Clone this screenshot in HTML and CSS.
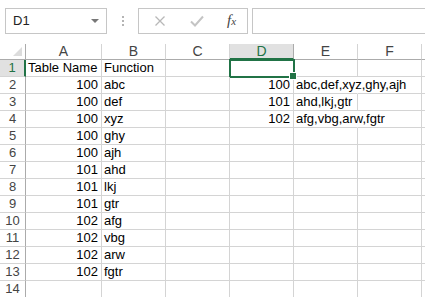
FILE: index.html
```html
<!DOCTYPE html>
<html lang="en">

<head>
    <meta charset="UTF-8">
    <title>Sheet1</title>
    <link rel="stylesheet" href="styles.css">
</head>

<body>
    <!-- Formula bar -->
    <div class="toolbar">
        <div class="name-box">
            <span>D1</span>
            <span class="caret"></span>
        </div>
        <div class="grip"><i></i><i></i><i></i></div>
        <div class="fx-group">
            <svg class="fx-icon" width="12" height="12" viewBox="0 0 12 12">
                <path d="M1.5 1.5 L10.5 10.5 M10.5 1.5 L1.5 10.5" stroke="#b8b8b8" stroke-width="1.3" fill="none"/>
            </svg>
            <svg class="fx-icon" width="14" height="12" viewBox="0 0 14 12">
                <path d="M1 6.5 L5 10.5 L13 1.5" stroke="#c4c4c4" stroke-width="2" fill="none"/>
            </svg>
            <span class="fx">f<small>x</small></span>
        </div>
        <div class="formula-input"></div>
    </div>

    <!-- Grid -->
    <div class="sheet">
        <div class="corner"><span class="tri"></span></div>
        <div class="col-head">A</div>
        <div class="col-head">B</div>
        <div class="col-head">C</div>
        <div class="col-head active">D</div>
        <div class="col-head">E</div>
        <div class="col-head">F</div>
        <div class="col-head"></div>

        <div class="row-head active">1</div>
        <div class="cell">Table Name</div>
        <div class="cell">Function</div>
        <div class="cell"></div>
        <div class="cell selected"></div>
        <div class="cell"></div>
        <div class="cell"></div>
        <div class="cell"></div>

        <div class="row-head">2</div>
        <div class="cell num">100</div>
        <div class="cell">abc</div>
        <div class="cell"></div>
        <div class="cell num">100</div>
        <div class="cell spill">abc,def,xyz,ghy,ajh</div>
        <div class="cell"></div>
        <div class="cell"></div>

        <div class="row-head">3</div>
        <div class="cell num">100</div>
        <div class="cell">def</div>
        <div class="cell"></div>
        <div class="cell num">101</div>
        <div class="cell">ahd,lkj,gtr</div>
        <div class="cell"></div>
        <div class="cell"></div>

        <div class="row-head">4</div>
        <div class="cell num">100</div>
        <div class="cell">xyz</div>
        <div class="cell"></div>
        <div class="cell num">102</div>
        <div class="cell spill">afg,vbg,arw,fgtr</div>
        <div class="cell"></div>
        <div class="cell"></div>

        <div class="row-head">5</div>
        <div class="cell num">100</div>
        <div class="cell">ghy</div>
        <div class="cell"></div><div class="cell"></div><div class="cell"></div><div class="cell"></div><div class="cell"></div>

        <div class="row-head">6</div>
        <div class="cell num">100</div>
        <div class="cell">ajh</div>
        <div class="cell"></div><div class="cell"></div><div class="cell"></div><div class="cell"></div><div class="cell"></div>

        <div class="row-head">7</div>
        <div class="cell num">101</div>
        <div class="cell">ahd</div>
        <div class="cell"></div><div class="cell"></div><div class="cell"></div><div class="cell"></div><div class="cell"></div>

        <div class="row-head">8</div>
        <div class="cell num">101</div>
        <div class="cell">lkj</div>
        <div class="cell"></div><div class="cell"></div><div class="cell"></div><div class="cell"></div><div class="cell"></div>

        <div class="row-head">9</div>
        <div class="cell num">101</div>
        <div class="cell">gtr</div>
        <div class="cell"></div><div class="cell"></div><div class="cell"></div><div class="cell"></div><div class="cell"></div>

        <div class="row-head">10</div>
        <div class="cell num">102</div>
        <div class="cell">afg</div>
        <div class="cell"></div><div class="cell"></div><div class="cell"></div><div class="cell"></div><div class="cell"></div>

        <div class="row-head">11</div>
        <div class="cell num">102</div>
        <div class="cell">vbg</div>
        <div class="cell"></div><div class="cell"></div><div class="cell"></div><div class="cell"></div><div class="cell"></div>

        <div class="row-head">12</div>
        <div class="cell num">102</div>
        <div class="cell">arw</div>
        <div class="cell"></div><div class="cell"></div><div class="cell"></div><div class="cell"></div><div class="cell"></div>

        <div class="row-head">13</div>
        <div class="cell num">102</div>
        <div class="cell">fgtr</div>
        <div class="cell"></div><div class="cell"></div><div class="cell"></div><div class="cell"></div><div class="cell"></div>

        <div class="row-head">14</div>
        <div class="cell"></div><div class="cell"></div><div class="cell"></div><div class="cell"></div><div class="cell"></div><div class="cell"></div><div class="cell"></div>
    </div>
</body>

</html>
```

FILE: styles.css
```css
* {
    box-sizing: border-box;
}

body {
    margin: 0;
    background-color: #fff;
    font-family: "Liberation Sans", Arial, sans-serif;
    overflow: hidden;
}

/* formula bar */
.toolbar {
    display: flex;
    align-items: center;
    height: 44px;
    padding: 0 0 3px 5px;
}

.name-box {
    display: flex;
    align-items: center;
    justify-content: space-between;
    width: 102px;
    height: 26px;
    padding: 0 7px 0 7px;
    border: 1px solid #c6c6c6;
    font-size: 13px;
    color: #222;
}

.caret {
    width: 0;
    height: 0;
    border-left: 4px solid transparent;
    border-right: 4px solid transparent;
    border-top: 4px solid #777;
    margin-top: 1px;
}

.grip {
    display: flex;
    flex-direction: column;
    gap: 2px;
    width: 31px;
    align-items: center;
}

.grip i {
    width: 2px;
    height: 2px;
    background-color: #b4b4b4;
}

.fx-group {
    display: flex;
    align-items: center;
    width: 110px;
    height: 26px;
    padding-left: 15px;
    border: 1px solid #c6c6c6;
}

.fx-icon {
    margin-right: 24px;
}

.fx-icon + .fx-icon {
    margin-right: 23px;
}

.fx {
    font-family: "Liberation Serif", "Times New Roman", serif;
    font-style: italic;
    font-size: 15px;
    color: #444;
}

.fx small {
    font-size: 11px;
}

.formula-input {
    flex: 1;
    height: 26px;
    margin-left: 4px;
    border: 1px solid #c6c6c6;
    border-right: none;
}

/* grid */
.sheet {
    display: grid;
    grid-template-columns: 26px 76px 64px 64px 64px 64px 64px 10px;
    grid-template-rows: 16px;
    grid-auto-rows: 17px;
    font-size: 13px;
}

.corner {
    position: relative;
    border-right: 1px solid #ababab;
    border-bottom: 1px solid #ababab;
}

.tri {
    position: absolute;
    right: 3px;
    bottom: 3px;
    width: 0;
    height: 0;
    border-left: 9px solid transparent;
    border-bottom: 9px solid #dcdcdc;
}

.col-head {
    text-align: center;
    line-height: 15px;
    font-size: 14px;
    color: #444;
    border-right: 1px solid #d4d4d4;
    border-bottom: 1px solid #ababab;
}

.col-head.active {
    background-color: #e1e1e1;
    color: #217346;
    border-bottom: 2px solid #217346;
    border-right-color: #ababab;
}

.row-head {
    text-align: center;
    line-height: 16px;
    font-size: 13px;
    color: #444;
    border-right: 1px solid #ababab;
    border-bottom: 1px solid #d4d4d4;
}

.row-head.active {
    background-color: #e1e1e1;
    color: #217346;
    border-right: 2px solid #217346;
}

.cell {
    position: relative;
    padding: 0 3px 0 2px;
    line-height: 16px;
    color: #000;
    white-space: nowrap;
    border-right: 1px solid #d4d4d4;
    border-bottom: 1px solid #d4d4d4;
}

.cell.num {
    text-align: right;
}

.cell.spill {
    border-right-color: transparent;
}

.cell.selected::after {
    content: "";
    position: absolute;
    left: -1px;
    top: -1px;
    right: -2px;
    bottom: -2px;
    border: 2px solid #217346;
}

.cell.selected::before {
    content: "";
    position: absolute;
    right: -4px;
    bottom: -4px;
    width: 6px;
    height: 6px;
    background-color: #217346;
    border: 1px solid #fff;
    z-index: 1;
}
```
